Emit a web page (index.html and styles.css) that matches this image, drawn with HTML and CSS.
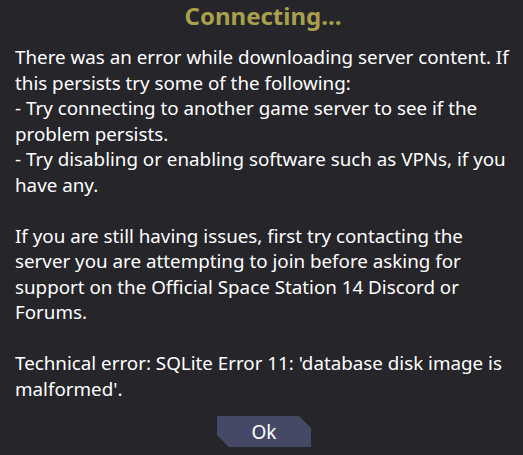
FILE: index.html
```html
<!DOCTYPE html>
<html lang="en">

<head>
  <meta charset="UTF-8">
  <meta name="viewport" content="width=device-width, initial-scale=1.0">
  <title>Connecting...</title>
  <link rel="stylesheet" href="styles.css">
</head>

<body>
  <div class="dialog">
    <h2 class="title">Connecting...</h2>

    <div class="message">
      <p>There was an error while downloading server content. If this persists try some of the following:<br>
        - Try connecting to another game server to see if the problem persists.<br>
        - Try disabling or enabling software such as VPNs, if you have any.</p>
      <p>If you are still having issues, first try contacting the server you are attempting to join before asking for support on the Official Space Station 14 Discord or Forums.</p>
      <p>Technical error: SQLite Error 11: 'database disk image is malformed'.</p>
    </div>

    <div class="actions">
      <button class="ok-button">Ok</button>
    </div>
  </div>
</body>

</html>
```

FILE: styles.css
```css
html,
body {
  margin: 0;
  height: 100%;
  background-color: #25252a;
}

body {
  font-family: "Noto Sans", sans-serif;
  color: #ffffff;
}

.dialog {
  display: flex;
  flex-direction: column;
  padding: 0 12px 0 15px;
}

.title {
  margin: 0;
  text-align: center;
  font-size: 24px;
  font-weight: bold;
  line-height: 32px;
  color: #a8a04c;
}

.message {
  margin-top: 13px;
  font-size: 18.8px;
  line-height: 25.5px;
}

.message p {
  margin: 0 0 25.5px 0;
}

.message p:last-child {
  margin-bottom: 0;
}

.actions {
  display: flex;
  justify-content: center;
  margin-top: 14px;
}

.ok-button {
  width: 94px;
  height: 31px;
  margin-left: 2px;
  border: none;
  padding: 0;
  background-color: #464966;
  color: #ffffff;
  font-family: "Noto Sans", sans-serif;
  font-size: 19px;
  clip-path: polygon(0 0, 82px 0, 100% 12px, 100% 100%, 12px 100%, 0 19px);
  cursor: pointer;
}
```
